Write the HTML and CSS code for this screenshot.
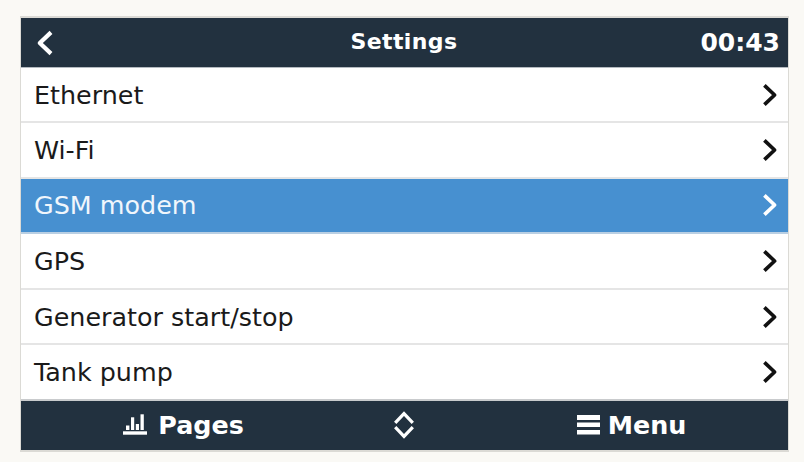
FILE: index.html
```html
<!DOCTYPE html>
<html lang="en">
<head>
    <meta charset="UTF-8">
    <meta name="viewport" content="width=device-width, initial-scale=1.0">
    <title>Settings</title>
    <link rel="stylesheet" href="styles.css">
</head>
<body>
    <svg class="defs" width="0" height="0">
        <symbol id="chevron" viewBox="0 0 16 24">
            <path d="M2.4 2.4 L12.6 12 L2.4 21.6" fill="none" stroke="currentColor" stroke-width="3.7" stroke-linejoin="round" />
        </symbol>
    </svg>

    <div class="screen">
        <header class="bar top-bar">
            <svg class="back" viewBox="0 0 17 26">
                <path d="M15 2.4 L3.8 13 L15 23.6" fill="none" stroke="currentColor" stroke-width="4.2" stroke-linejoin="round" />
            </svg>
            <h1>Settings</h1>
            <span class="clock">00:43</span>
        </header>

        <ul class="list">
            <li><span>Ethernet</span><svg class="chevron"><use href="#chevron" /></svg></li>
            <li><span>Wi-Fi</span><svg class="chevron"><use href="#chevron" /></svg></li>
            <li class="selected"><span>GSM modem</span><svg class="chevron"><use href="#chevron" /></svg></li>
            <li><span>GPS</span><svg class="chevron"><use href="#chevron" /></svg></li>
            <li><span>Generator start/stop</span><svg class="chevron"><use href="#chevron" /></svg></li>
            <li><span>Tank pump</span><svg class="chevron"><use href="#chevron" /></svg></li>
        </ul>

        <footer class="bar bottom-bar">
            <div class="pages">
                <svg width="24" height="21" viewBox="0 0 24 21" fill="currentColor">
                    <rect x="3" y="11.5" width="3.4" height="4.5" />
                    <rect x="8" y="3.3" width="3.2" height="12.7" />
                    <rect x="12.8" y="10" width="3.2" height="6" />
                    <rect x="17.5" y="0.3" width="3.3" height="15.7" />
                    <rect x="0" y="17.3" width="24" height="3.4" />
                </svg>
                <span>Pages</span>
            </div>
            <div class="scroll">
                <svg width="20" height="28" viewBox="0 0 20 28" fill="none" stroke="currentColor" stroke-width="3.2">
                    <path d="M1.2 11.8 L10 2.6 L18.8 11.8" />
                    <path d="M1.2 16.2 L10 25.4 L18.8 16.2" />
                </svg>
            </div>
            <div class="menu">
                <svg width="23" height="20" viewBox="0 0 23 20" fill="currentColor">
                    <rect width="23" height="5" />
                    <rect y="7.5" width="23" height="4.5" />
                    <rect y="15" width="23" height="4.5" />
                </svg>
                <span>Menu</span>
            </div>
        </footer>
    </div>
</body>
</html>
```

FILE: styles.css
```css
* {
    box-sizing: border-box;
}

body {
    margin: 0;
    padding: 16px 15px 10px 20px;
    background-color: #faf9f5;
    font-family: "DejaVu Sans", Verdana, sans-serif;
    overflow: hidden;
}

.defs {
    position: absolute;
}

.screen {
    width: 769px;
    height: 436px;
    display: flex;
    flex-direction: column;
    background-color: #fff;
    border: 1px solid #dbdad5;
    border-width: 2px 1px;
}

.bar {
    flex: none;
    background-color: #22313f;
    color: #fff;
    font-weight: bold;
    font-size: 25.4px;
}

.top-bar {
    height: 49px;
    display: grid;
    grid-template-columns: 1fr auto 1fr;
    align-items: center;
    padding: 0 8px 0 15px;
}

.top-bar h1 {
    margin: 0 0 2px -8px;
    font-size: 22px;
    letter-spacing: 0.4px;
}

.back {
    width: 17px;
    height: 26px;
}

.clock {
    font-size: 25px;
    text-align: right;
}

.list {
    flex: 1;
    display: flex;
    flex-direction: column;
    margin: 0;
    padding: 0;
    list-style: none;
    border-top: 1px solid #b4bac0;
}

.list li {
    flex: 1;
    display: flex;
    align-items: center;
    justify-content: space-between;
    padding: 0 10px 0 13px;
    border-bottom: 2px solid #e5e5e5;
    color: #1a1a1a;
    font-size: 25.4px;
}

.list li:first-child {
    flex: 0 0 55px;
}

.list li.selected {
    background-color: #4790d0;
    border-bottom-color: #b9cfe3;
    color: #f0f6fc;
}

.list li:last-child {
    border-bottom-color: #c9cbcd;
}

.chevron {
    width: 16px;
    height: 24px;
    color: #111;
}

.selected .chevron {
    color: #fff;
}

.bottom-bar {
    height: 49px;
    display: grid;
    grid-template-columns: 325px 116px 1fr;
    align-items: center;
    padding-bottom: 2px;
}

.bottom-bar div {
    display: flex;
    align-items: center;
    justify-content: center;
}

.pages {
    gap: 11px;
}

.menu {
    gap: 8px;
    padding-left: 13px;
}
```
